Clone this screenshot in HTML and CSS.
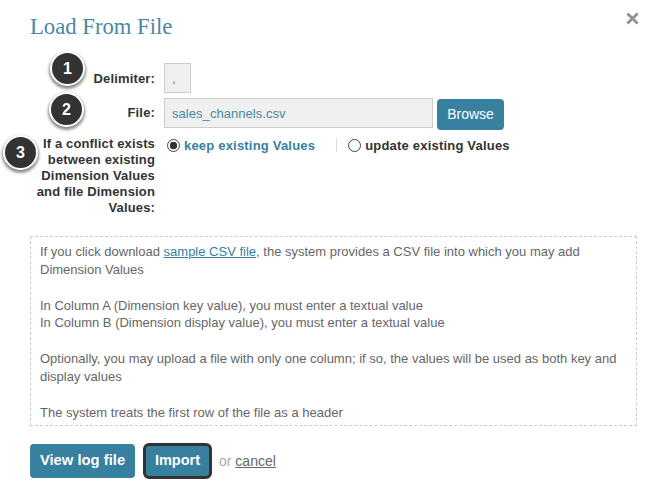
FILE: index.html
```html
<!DOCTYPE html>
<html lang="en">
<head>
<meta charset="utf-8">
<title>Load From File</title>
<link rel="stylesheet" href="styles.css">
</head>
<body>
<main class="dialog">
  <header class="head">
    <h1 class="title">Load From File</h1>
    <svg class="close" width="13" height="13" viewBox="0 0 14 14" aria-label="Close"><path d="M1.5 1.5l11 11M12.5 1.5l-11 11" stroke="#919191" stroke-width="3" fill="none"/></svg>
  </header>
  <form class="form">
    <div class="row row-delim">
      <label class="label">Delimiter:</label>
      <input class="input input-small" value=",">
    </div>
    <div class="row row-file">
      <label class="label">File:</label>
      <input class="input input-file" value="sales_channels.csv">
      <button type="button" class="btn btn-browse">Browse</button>
    </div>
    <div class="row row-conflict">
      <label class="label">If a conflict exists between existing Dimension Values and file Dimension Values:</label>
      <div class="radios">
        <span class="radio-item selected"><span class="radio on"></span>keep existing Values</span>
        <span class="sep"></span>
        <span class="radio-item"><span class="radio"></span>update existing Values</span>
      </div>
    </div>
  </form>
  <section class="info">
    <p>If you click download <a href="#" class="link">sample CSV file</a>, the system provides a CSV file into which you may add Dimension Values</p>
    <p>In Column A (Dimension key value), you must enter a textual value<br>In Column B (Dimension display value), you must enter a textual value</p>
    <p>Optionally, you may upload a file with only one column; if so, the values will be used as both key and display values</p>
    <p>The system treats the first row of the file as a header</p>
  </section>
  <footer class="actions">
    <button type="button" class="btn btn-main">View log file</button>
    <button type="button" class="btn btn-main btn-focus">Import</button>
    <span class="or">or <a href="#" class="cancel">cancel</a></span>
  </footer>
  <span class="callout c1">1</span>
  <span class="callout c2">2</span>
  <span class="callout c3">3</span>
</main>
</body>
</html>
```
FILE: styles.css
```css
* { box-sizing: border-box; }
html, body { margin: 0; background: #fff; }
body { font-family: "Liberation Sans", Arial, sans-serif; color: #666; }
.dialog { position: relative; width: 650px; height: 491px; padding: 14px 11px 0 30px; overflow: hidden; }
.head { display: flex; justify-content: space-between; align-items: flex-start; height: 49px; }
.title { margin: 0; font: 400 22.7px/26px "Liberation Serif", serif; color: #4a87a6; }
.close { margin-top: -2px; }
.form { display: flex; flex-direction: column; margin-left: -30px; }
.row { display: grid; grid-template-columns: 155px auto; column-gap: 9px; justify-content: start; }
.label { font-size: 13px; font-weight: 700; line-height: 16px; letter-spacing: .15px; text-align: right; color: #333; }
.row-delim { height: 35px; align-items: start; }
.row-delim .label { padding-top: 8px; }
.row-file { grid-template-columns: 155px 269px auto; height: 37px; align-items: start; }
.row-file .label { padding-top: 7px; }
.row-file .btn-browse { margin: 1px 0 0 -5px; }
.row-conflict { height: 100px; margin-top: 1px; }
.row-conflict .label { width: 125px; justify-self: end; }
.input { height: 30px; border: 1px solid #ccc; background: #f0f0f0; padding: 0 7px; font: 13px "Liberation Sans", Arial, sans-serif; color: #4a87a6; letter-spacing: .05px; outline: 0; }
.input-small { width: 27px; }
.input-file { width: 269px; }
.btn { border: 0; border-radius: 4px; background: #37809f; color: #fff; font-family: "Liberation Sans", Arial, sans-serif; font-size: 14px; cursor: pointer; }
.btn-browse { width: 67px; height: 31px; padding: 0 0 1px; }
.radios { display: flex; align-items: center; height: 16px; margin: 1px 0 0 3px; font-size: 13px; font-weight: 700; letter-spacing: .2px; color: #333; }
.radio-item { display: flex; align-items: center; gap: 4px; }
.selected { color: #37809f; }
.radio { width: 13px; height: 13px; border: 1px solid #444; border-radius: 50%; background: #fff; }
.radio.on { background: radial-gradient(circle, #333 0 3.5px, #fff 4px); }
.sep { width: 1px; height: 14px; background: #ddd; margin: 0 11px 0 21px; }
.info { width: 607px; height: 190px; border: 1px dashed #ccc; padding: 6px 9px; font-size: 13px; line-height: 17.5px; }
.info p { margin: 0 0 18.5px; }
.link { color: #37809f; }
.actions { display: flex; align-items: center; gap: 8px; margin-top: 17px; height: 36px; }
.btn-main { height: 34px; width: 105px; padding: 0 0 2px; font-size: 14.8px; font-weight: 700; }
.btn-focus { width: 69px; height: 36px; border: 3px solid #333; border-radius: 6px; font-size: 14.5px; }
.or { margin-left: -1px; font-size: 14px; color: #aaa; }
.cancel { color: #666; }
.callout { position: absolute; width: 35px; height: 35px; border-radius: 50%; background: #333; border: 2px solid #fff; color: #fff; font-size: 16px; font-weight: 700; display: flex; align-items: center; justify-content: center; box-shadow: 0 2px 3px 1px rgba(0,0,0,.45); }
.c1 { left: 50px; top: 51px; }
.c2 { left: 49px; top: 92px; }
.c3 { left: 3px; top: 135px; }
```
